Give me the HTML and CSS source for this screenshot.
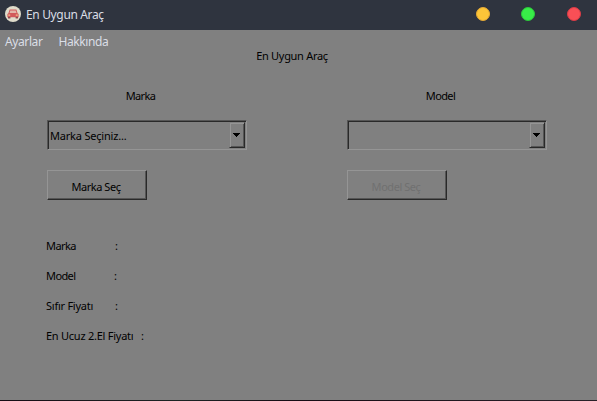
FILE: index.html
```html
<!DOCTYPE html>
<html lang="tr">
<head>
<meta charset="utf-8">
<title>En Uygun Araç</title>
<link rel="stylesheet" href="styles.css">
</head>
<body>
<div class="window">
  <header class="titlebar">
    <svg class="app-icon" width="16" height="16" viewBox="0 0 16 16">
      <circle cx="8" cy="8" r="8" fill="#e0dccb"/>
      <path d="M4.6 3.6h6.8l1.2 3.6 1 .8v3.2H2.4V8l1-.8z" fill="#d2595b"/>
      <path d="M5.3 4.6h5.4l.8 2.4h-7z" fill="#e3b5a9"/>
      <path d="M3 11h2.4v1.6H3zM10.6 11H13v1.6h-2.4z" fill="#8f4a50"/>
      <path d="M3.3 8.5h1.9v1.2H3.3zM10.8 8.5h1.9v1.2h-1.9z" fill="#efc58a"/>
    </svg>
    <span class="title">En Uygun Araç</span>
    <div class="controls">
      <span class="dot minimize"></span>
      <span class="dot maximize"></span>
      <span class="dot close"></span>
    </div>
  </header>
  <nav class="menu"><span>Ayarlar</span><span>Hakkında</span></nav>
  <main>
    <h1>En Uygun Araç</h1>
    <div class="columns">
      <section class="column">
        <div class="label"><span class="short">Marka</span></div>
        <div class="combo"><span class="value">Marka Seçiniz...</span><span class="arrow"><svg width="7" height="4" viewBox="0 0 7 4" shape-rendering="crispEdges"><path d="M0 0h7v1H6v1H5v1H4v1H3V3H2V2H1V1H0z"/></svg></span></div>
        <div class="button"><span class="pick">Marka Seç</span></div>
      </section>
      <section class="column">
        <div class="label"><span class="short">Model</span></div>
        <div class="combo"><span class="value"></span><span class="arrow"><svg width="7" height="4" viewBox="0 0 7 4" shape-rendering="crispEdges"><path d="M0 0h7v1H6v1H5v1H4v1H3V3H2V2H1V1H0z"/></svg></span></div>
        <div class="button disabled"><span class="pick">Model Seç</span></div>
      </section>
    </div>
    <div class="details">
      <div class="row"><span class="short">Marka</span><span>:</span></div>
      <div class="row shifted"><span class="short">Model</span><span>:</span></div>
      <div class="row"><span class="long">Sıfır Fiyatı</span><span>:</span></div>
      <div class="row wide"><span class="long">En Ucuz 2.El Fiyatı</span><span>:</span></div>
    </div>
  </main>
  <footer class="edge"></footer>
</div>
</body>
</html>
```

FILE: styles.css
```css
* { box-sizing: border-box; }
body {
  margin: 0;
  width: 597px;
  height: 401px;
  overflow: hidden;
  background: #808080;
  color: #000;
  font: 11px/14px "Noto Sans", "Open Sans", sans-serif;
  white-space: nowrap;
}
.window { display: flex; flex-direction: column; height: 401px; }
.titlebar {
  display: flex;
  align-items: center;
  height: 30px;
  padding: 0 16px 2px 5px;
  background: #2f343f;
  color: #d9dde5;
  font-size: 12px;
}
.app-icon { margin-right: 5px; }
.title { letter-spacing: -0.35px; padding-top: 2px; }
.controls { display: flex; margin-left: auto; }
.dot { width: 14px; height: 14px; border-radius: 50%; }
.minimize { background: #fdc538; margin-right: 31px; border: 1px solid #e5a936; }
.maximize { background: #38ed48; margin-right: 32px; border: 1px solid #2bc83b; }
.close { background: #f94f56; border: 1px solid #da3b46; }
.menu {
  display: flex;
  gap: 16px;
  height: 19px;
  padding: 4px 5px 0;
  color: #dadee6;
  font-size: 12px;
  line-height: 16px;
  letter-spacing: -0.4px;
}
main { flex: 1; }
h1 {
  margin: 0;
  padding-right: 13px;
  font-size: 11px;
  font-weight: 400;
  text-align: center;
  letter-spacing: -0.3px;
}
.columns { display: flex; gap: 100px; padding: 26px 0 0 46px; }
.column { width: 200px; }
.label { padding-right: 11px; text-align: center; }
.short { letter-spacing: -0.6px; }
.long { letter-spacing: -0.25px; }
.pick { letter-spacing: -0.45px; }
.combo {
  display: flex;
  width: 200px;
  height: 30px;
  margin: 17px 0 0 1px;
  padding: 1px 1px 1px 2px;
  border: 1px solid;
  border-color: #555 #959595 #959595 #555;
  box-shadow: inset 1px 1px #292929;
}
.value { flex: 1; padding-top: 7px; letter-spacing: -0.2px; }
.arrow {
  display: flex;
  align-items: center;
  justify-content: center;
  width: 16px;
  height: 26px;
  padding-right: 1px;
  border: 1px solid;
  border-color: #808080 #292929 #292929 #808080;
  box-shadow: inset 1px 1px #959595, inset -1px -1px #555;
}
.button {
  display: flex;
  align-items: center;
  justify-content: center;
  width: 100px;
  height: 30px;
  margin: 20px 0 0 1px;
  padding: 3px 2px 0 0;
  border: 1px solid;
  border-color: #959595 #292929 #292929 #959595;
  box-shadow: inset -1px -1px #555;
}
.disabled { color: #707070; }
.details { display: grid; gap: 16px; padding: 39px 0 0 46px; }
.row { display: grid; grid-template-columns: 69px auto; }
.shifted { grid-template-columns: 68px auto; }
.wide { grid-template-columns: 95px auto; }
.edge { height: 1px; background: linear-gradient(90deg, #160c14, #1c2424 30%, #160c14 50%, #292229); }
```
